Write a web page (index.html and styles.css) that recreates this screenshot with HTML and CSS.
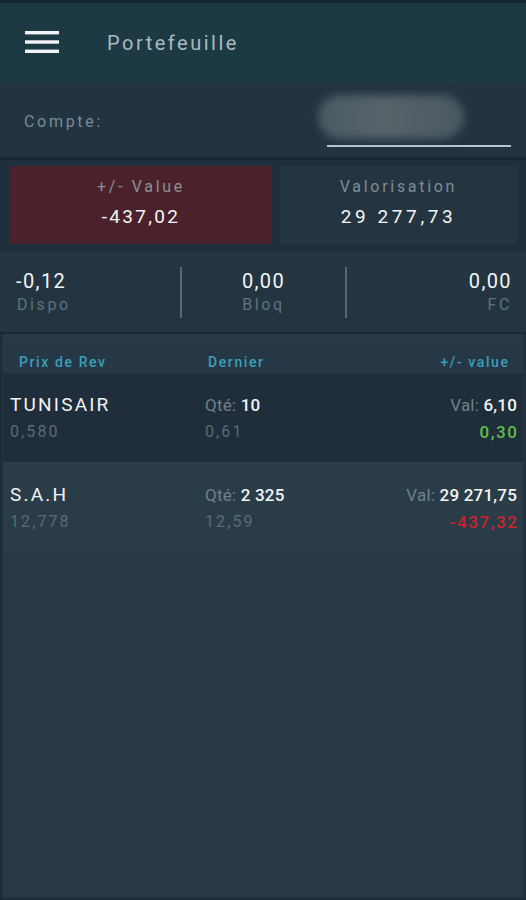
FILE: index.html
```html
<!DOCTYPE html>
<html lang="fr">
<head>
<meta charset="utf-8">
<title>Portefeuille</title>
<link rel="stylesheet" href="styles.css">
</head>
<body>
<div class="app">
  <header class="topbar">
    <svg class="menu" width="34" height="24" viewBox="0 0 34 24" aria-hidden="true">
      <rect x="0" y="1" width="34" height="3.4" fill="#f2f4f5"/>
      <rect x="0" y="10.3" width="34" height="3.4" fill="#f2f4f5"/>
      <rect x="0" y="19.6" width="34" height="3.4" fill="#f2f4f5"/>
    </svg>
    <h1 class="title">Portefeuille</h1>
  </header>

  <section class="account">
    <span class="account-label">Compte:</span>
    <div class="account-field">
      <div class="account-blur"></div>
      <div class="account-line"></div>
    </div>
  </section>

  <section class="cards">
    <div class="card card-loss">
      <div class="card-label">+/- Value</div>
      <div class="card-value">-437,02</div>
    </div>
    <div class="card card-neutral">
      <div class="card-label">Valorisation</div>
      <div class="card-value wide">29 277,73</div>
    </div>
  </section>

  <section class="balances">
    <div class="bal bal-left">
      <div class="bal-value">-0,12</div>
      <div class="bal-label">Dispo</div>
    </div>
    <div class="divider"></div>
    <div class="bal bal-center">
      <div class="bal-value">0,00</div>
      <div class="bal-label">Bloq</div>
    </div>
    <div class="divider"></div>
    <div class="bal bal-right">
      <div class="bal-value">0,00</div>
      <div class="bal-label">FC</div>
    </div>
  </section>

  <section class="list">
    <div class="list-head">
      <span class="col-a">Prix de Rev</span>
      <span class="col-b">Dernier</span>
      <span class="col-c">+/- value</span>
    </div>
    <div class="row row-dark">
      <div class="col-a">
        <div class="name">TUNISAIR</div>
        <div class="sub">0,580</div>
      </div>
      <div class="col-b">
        <div class="kv"><span class="k">Qté:</span> <span class="v">10</span></div>
        <div class="sub">0,61</div>
      </div>
      <div class="col-c">
        <div class="kv"><span class="k">Val:</span> <span class="v">6,10</span></div>
        <div class="pl gain">0,30</div>
      </div>
    </div>
    <div class="row row-light">
      <div class="col-a">
        <div class="name">S.A.H</div>
        <div class="sub">12,778</div>
      </div>
      <div class="col-b">
        <div class="kv"><span class="k">Qté:</span> <span class="v">2 325</span></div>
        <div class="sub">12,59</div>
      </div>
      <div class="col-c">
        <div class="kv"><span class="k">Val:</span> <span class="v">29 271,75</span></div>
        <div class="pl loss">-437,32</div>
      </div>
    </div>
  </section>
</div>
</body>
</html>
```
FILE: styles.css
```css
* { box-sizing: border-box; }
html, body {
  margin: 0;
  padding: 0;
  height: 100%;
}
body {
  background: #283a47;
  font-family: Roboto, "Noto Sans", "Liberation Sans", sans-serif;
  color: #ffffff;
}
.app {
  min-height: 900px;
  background: #283946;
  border-top: 3px solid #16262f;
  box-shadow: inset 3px 0 2px -1px #1b2b38, inset -3px 0 2px -1px #1f2f3b, inset 0 -3px 2px -1px #1d2c38;
  display: flex;
  flex-direction: column;
}

/* header */
.topbar {
  height: 80px;
  background: #1d3a44;
  display: flex;
  align-items: center;
  padding-left: 25px;
}
.menu { display: block; margin-top: -2px; }
.title {
  margin: 0 0 0 48px;
  font-size: 20px;
  font-weight: 400;
  letter-spacing: 2.5px;
  color: #a8babf;
}

/* account */
.account {
  height: 77px;
  background: #223441;
  border-bottom: 3px solid #1a2933;
  display: flex;
  align-items: center;
  justify-content: space-between;
  padding: 0 15px 0 24px;
}
.account-label {
  font-size: 16px;
  letter-spacing: 2.7px;
  color: #7b8b93;
  margin-top: 2px;
}
.account-field {
  width: 184px;
  display: flex;
  flex-direction: column;
  align-items: flex-start;
  margin-top: 1px;
}
.account-blur {
  width: 146px;
  height: 44px;
  margin-left: -9px;
  border-radius: 22px;
  background: linear-gradient(90deg, #4a5a62 0%, #58636a 45%, #4a5860 100%);
  filter: blur(4px);
}
.account-line {
  width: 184px;
  height: 2px;
  margin-top: 6px;
  background: #b9c7cc;
}

/* cards */
.cards {
  background: #1f2f3b;
  padding: 6px 9px 8px 10px;
  display: flex;
  gap: 8px;
}
.card {
  height: 78px;
  display: flex;
  flex-direction: column;
  align-items: center;
  padding-top: 10px;
}
.card-loss { flex: 0 0 262px; background: #4b222b; }
.card-neutral { flex: 1; background: #243441; }
.card-label {
  font-size: 16px;
  letter-spacing: 2.7px;
  color: #8a9199;
  line-height: 22px;
}
.card-neutral .card-label { color: #7f8d96; }
.card-value {
  font-size: 19px;
  letter-spacing: 2.3px;
  line-height: 38px;
  color: #f4f6f7;
}
.card-value.wide { letter-spacing: 3.6px; }

/* balances */
.balances {
  height: 82px;
  background: #243542;
  border-bottom: 2px solid #1a2933;
  display: flex;
  align-items: flex-start;
  padding: 0 15px 0 16px;
}
.bal {
  flex: 1;
  display: flex;
  flex-direction: column;
  padding-top: 17px;
}
.bal-left { align-items: flex-start; }
.bal-center { align-items: center; }
.bal-right { align-items: flex-end; }
.bal-value {
  font-size: 20px;
  letter-spacing: 1.4px;
  line-height: 24px;
  color: #f2f4f5;
}
.bal-label {
  font-size: 16px;
  letter-spacing: 2.6px;
  line-height: 24px;
  color: #5f717c;
}
.bal-left .bal-label { padding-left: 1px; }
.bal-right .bal-value, .bal-right .bal-label { margin-right: -1px; }
.divider {
  width: 2px;
  height: 51px;
  background: #566873;
  margin-top: 15px;
}

/* list */
.list {
  margin: 11px 3px 0 3px;
  display: flex;
  flex-direction: column;
}
.list-head {
  height: 28px;
  background: #263846;
  border-radius: 3px 3px 0 0;
  display: grid;
  grid-template-columns: 189px 1fr 1fr;
  align-items: start;
  padding: 6px 15px 0 16px;
  font-size: 14px;
  line-height: 22px;
  font-weight: 500;
  letter-spacing: 1.6px;
  color: #3a9fb9;
}
.list-head .col-c { text-align: right; margin-right: -1.6px; }
.row {
  display: grid;
  grid-template-columns: 195px 1fr 1fr;
  align-content: center;
  padding: 0 6px 0 7px;
}
.row-dark { background: #1f2e3a; height: 89px; }
.row-light { background: #2b3c49; height: 91px; }
.row .col-c { text-align: right; }
.name {
  font-size: 19px;
  letter-spacing: 2.2px;
  line-height: 28px;
  color: #f1f3f4;
}
.sub {
  font-size: 16px;
  letter-spacing: 2.1px;
  line-height: 26px;
  color: #5a6b76;
}
.kv {
  font-size: 17px;
  letter-spacing: 0.2px;
  line-height: 28px;
}
.k { color: #6f808a; }
.v { color: #f2f4f5; font-weight: 500; }
.pl {
  font-size: 17px;
  font-weight: 500;
  letter-spacing: 1.6px;
  line-height: 26px;
}
.col-c .pl { margin-right: -1.6px; }
.gain { color: #5fbd4c; }
.loss { color: #c9242b; }
```
